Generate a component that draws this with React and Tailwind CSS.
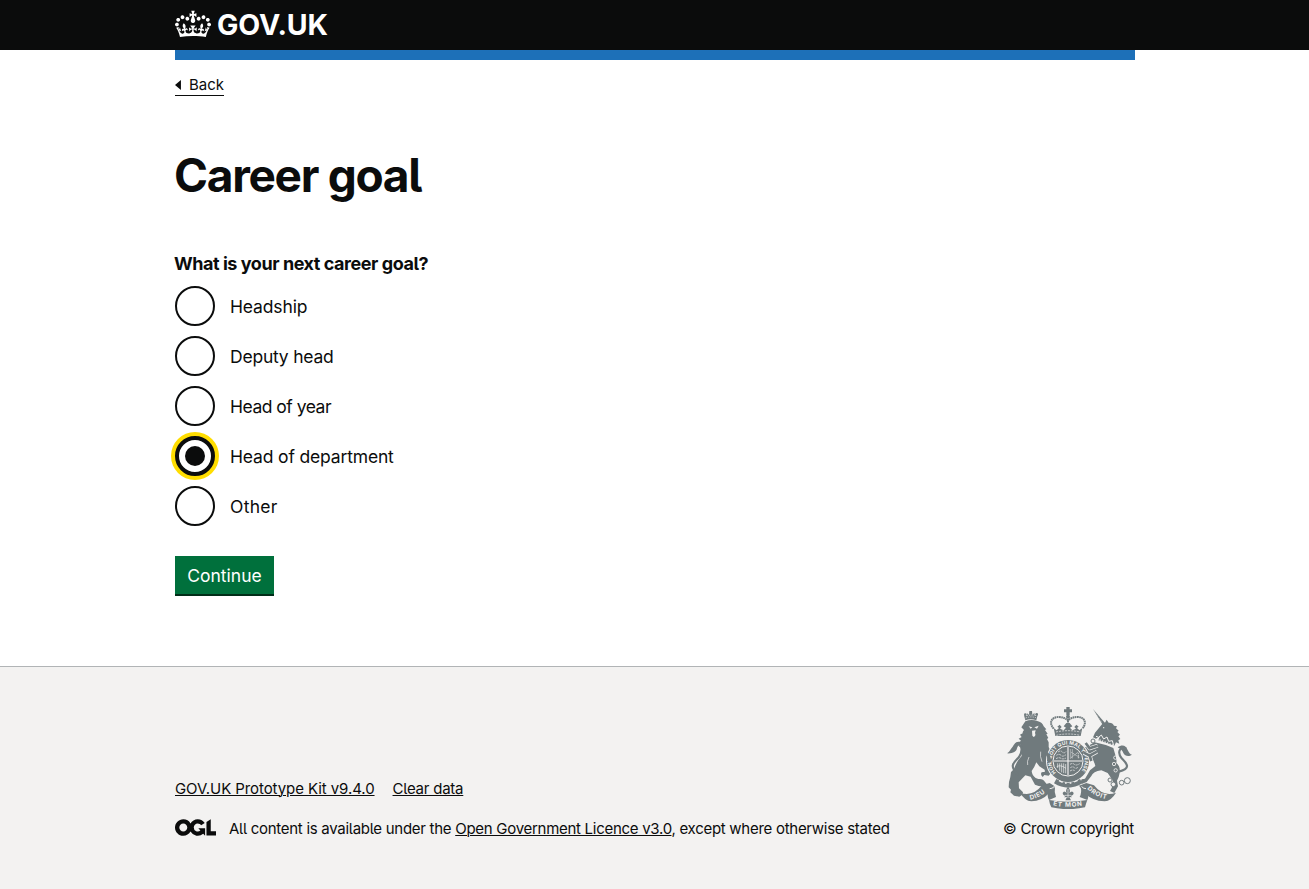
const options = [
  { label: "Headship", tracking: "tracking-[-0.14px]" },
  { label: "Deputy head", tracking: "tracking-[-0.22px]" },
  { label: "Head of year", tracking: "tracking-[-0.5px]" },
  { label: "Head of department", tracking: "tracking-[-0.16px]", checked: true },
  { label: "Other", tracking: "tracking-[0.3px]" },
];

function Crown() {
  return (
    <svg className="h-[30px] w-9 shrink-0" viewBox="0 0 132 97" fill="currentColor" aria-hidden="true">
      <path
        fillRule="evenodd"
        d="M25 30.2c3.5 1.5 7.7-.2 9.1-3.7 1.5-3.6-.2-7.8-3.9-9.2-3.6-1.4-7.6.3-9.1 3.9-1.4 3.5.3 7.5 3.9 9zM9 39.5c3.6 1.5 7.8-.2 9.2-3.7 1.5-3.6-.2-7.8-3.9-9.1-3.6-1.5-7.6.2-9.1 3.8-1.4 3.5.3 7.5 3.8 9zM4.4 57.2c3.5 1.5 7.7-.2 9.1-3.8 1.5-3.6-.2-7.7-3.9-9.1-3.5-1.5-7.6.3-9.1 3.8-1.4 3.5.3 7.6 3.9 9.1zm38.3-21.4c3.5 1.5 7.7-.2 9.1-3.8 1.5-3.6-.2-7.7-3.9-9.1-3.6-1.5-7.6.3-9.1 3.8-1.3 3.6.4 7.7 3.9 9.1zm64.4-5.6c-3.6 1.5-7.8-.2-9.1-3.7-1.5-3.6.2-7.8 3.8-9.2 3.6-1.4 7.7.3 9.2 3.9 1.3 3.5-.4 7.5-3.9 9zm15.9 9.3c-3.6 1.5-7.7-.2-9.1-3.7-1.5-3.6.2-7.8 3.7-9.1 3.6-1.5 7.7.2 9.2 3.8 1.5 3.5-.3 7.5-3.8 9zm4.7 17.7c-3.6 1.5-7.8-.2-9.2-3.8-1.5-3.6.2-7.7 3.9-9.1 3.6-1.5 7.7.3 9.2 3.8 1.3 3.5-.4 7.6-3.9 9.1zM89.3 35.8c-3.6 1.5-7.8-.2-9.2-3.8-1.4-3.6.2-7.7 3.9-9.1 3.6-1.5 7.7.3 9.2 3.8 1.4 3.6-.3 7.7-3.9 9.1zM69.7 17.7l8.9 4.7V9.3l-8.9 2.8c-.2-.3-.5-.6-.9-.9L72.4 0H59.6l3.5 11.2c-.3.3-.6.5-.9.9l-8.8-2.8v13.1l8.8-4.7c.3.3.6.7.9.9l-5 15.4v.1c-.2.8-.4 1.6-.4 2.4 0 4.1 3.1 7.5 7 8.1h.2c.3 0 .7.1 1 .1.4 0 .7 0 1-.1h.2c4-.6 7.1-4.1 7.1-8.1 0-.8-.1-1.7-.4-2.4V34l-5.1-15.4c.4-.2.7-.6 1-.9zM66 92.8c16.9 0 32.8 1.1 47.1 3.2 4-16.9 8.9-26.7 14-33.5l-9.6-3.4c1 4.9 1.1 7.2 0 10.2-1.5-1.4-3-4.3-4.2-8.7L108.6 76c2.8-2 5-3.2 7.5-3.3-4.4 9.4-10 11.9-13.6 11.2-4.3-.8-6.3-4.6-5.6-7.9 1-4.7 5.7-5.9 8-.5 4.3-8.7-3-11.4-7.6-8.8 7.1-7.2 7.9-13.5 2.1-21.1-8 6.1-8.1 12.3-4.5 20.8-4.7-5.4-12.1-2.5-9.5 6.2 3.4-5.2 7.9-2 7.2 3.1-.6 4.3-6.4 7.8-13.5 7.2-10.3-.9-10.9-8-11.2-13.8 2.5-.5 7.1 1.8 11 7.3L80.2 60c-4.1 4.4-8 5.3-12.3 5.4 1.4-4.4 8-11.6 8-11.6H55.5s6.4 7.2 7.9 11.6c-4.2-.1-8-1-12.3-5.4l1.4 16.4c3.9-5.5 8.5-7.7 10.9-7.3-.3 5.8-.9 12.8-11.1 13.8-7.2.6-12.9-2.9-13.5-7.2-.7-5 3.8-8.3 7.1-3.1 2.7-8.7-4.6-11.6-9.4-6.2 3.7-8.5 3.6-14.7-4.6-20.8-5.8 7.6-5 13.9 2.2 21.1-4.7-2.6-11.9.1-7.7 8.8 2.3-5.5 7.1-4.2 8.1.5.7 3.3-1.3 7.1-5.7 7.9-3.5.7-9-1.8-13.5-11.2 2.5.1 4.7 1.3 7.5 3.3l-4.7-15.4c-1.2 4.4-2.7 7.2-4.3 8.7-1.1-3-.9-5.3 0-10.2l-9.5 3.4c5 6.9 9.9 16.7 14 33.5 14.8-2.1 30.8-3.2 47.7-3.2z"
      />
    </svg>
  );
}

function OglLogo() {
  return (
    <svg className="h-[17px] w-[41px] shrink-0" viewBox="0 0 483.2 195.7" fill="currentColor" aria-hidden="true">
      <path d="M421.5 142.8V.1l-50.7 32.3v161.1h112.4v-50.7zm-122.3-9.6A47.12 47.12 0 0 1 221 97.8c0-26 21.1-47.1 47.1-47.1 16.7 0 31.4 8.7 39.7 21.8l42.7-27.2A97.63 97.63 0 0 0 268.1 0c-36.5 0-68.3 20.1-85.1 49.7A98 98 0 0 0 97.8 0C43.9 0 0 43.9 0 97.8s43.9 97.8 97.8 97.8c36.5 0 68.3-20.1 85.1-49.7a97.76 97.76 0 0 0 149.6 25.4l19.4 22.2h3v-87.8h-80l24.3 27.5zM97.8 145c-26 0-47.1-21.1-47.1-47.1s21.1-47.1 47.1-47.1 47.1 21.1 47.1 47.1S123.8 145 97.8 145" />
    </svg>
  );
}

function RoyalArms() {
  return (
    <svg className="h-[102px] w-[125px]" viewBox="36 36 375 306" fill="#707a7d" aria-hidden="true">
      <defs>
        <path id="garter" d="M183 233 A50 50 0 1 1 255 233" />
        <path id="motto-left" d="M106 314 Q134 310 157 286" />
        <path id="motto-mid" d="M174 331 Q218 340 268 331" />
        <path id="motto-right" d="M276 281 Q303 309 344 314" />
      </defs>

      {/* imperial crown */}
      <path d="M214 36h10v7h7v9h-7v8h-10v-8h-7v-9h7z" />
      <circle cx="219" cy="65" r="6" />
      <g fill="none" stroke="#707a7d">
        <path d="M176 101C160 82 171 66 190 66c13 0 22 4 29 10 7-6 16-10 29-10 19 0 30 16 14 35" strokeWidth="6" strokeDasharray="5 1.5" />
        <path d="M219 72v18" strokeWidth="6" strokeDasharray="4 1.5" />
      </g>
      <path d="M176 99l9 7 7-7-5-4 7-6 6 7-5 5 11 5 7-8-7-4 8-10h10l8 10-7 4 7 8 11-5-5-5 6-7 7 6-5 4 7 7 9-7-5 24H181z" />
      <path d="M183 111q36-8 73 0M184 121q35-8 71 0" fill="none" stroke="#f3f2f1" strokeWidth="2" strokeDasharray="6 3" />

      {/* lion */}
      <path d="M91 76l-4-15 8 3 1-9 6 4 1-11h8l1 11 6-5 2 9 8-4-4 17q-17-6-33 0z" />
      <circle cx="91" cy="59" r="4" />
      <circle cx="125" cy="58" r="4" />
      <path d="M95 61l24-1M92 69q15-6 31-1" fill="none" stroke="#f3f2f1" strokeWidth="2" strokeDasharray="4 3" />
      <path d="M91 79q19-8 38 0 13 3 17 15l8 9-4 2 8 11-4 2 6 11-4 3 5 10 0 14 7 16-1 11 6 4 1 14-5 3-3-9-9-4-4 5 5 11 9 8 0 10 5 7-6 4-5 6-13-2-5 6q-8-8-3-14l10-2-1-6-16-10-9-12q-6 16-14 26 1 13 12 21l8 3q14-2 20 9l7 8-7 6-19-2-11-4-13-24-16-4-20 21 1 18 12 12-2 7-9 6-16-3-11-10 2-8-7-7 1-16 4-15 2-15 9-9q8-24 23-39l-2-17 2-9-8-2 6-8-7-4 7-6-7-6 9-5-5-7 8-4q-1-5 4-10l-8-8z" />
      <path d="M101 94l11 3-5 4zM118 97l13-5-5 9zM111 107l11-1-2 8q4 8-4 12l-4-4z" fill="#f3f2f1" />
      <path d="M137 170q-3 14 4 30M102 186q-7 14-4 24" fill="none" stroke="#f3f2f1" strokeWidth="2" />
      <path d="M70 240C39 211 58 202 72 186 86 166 79 141 62 148" fill="none" stroke="#707a7d" strokeWidth="6.5" />
      <path d="M83 145c-17-12-24 1-30 10-8 8-8 15-17 20 17 1 28-4 30-15 3-10 9-9 17-15z" />

      {/* unicorn */}
      <path d="M294 42l36 42-7 5z" />
      <path d="M299 50l22 32" stroke="#f3f2f1" strokeWidth="1.5" strokeDasharray="2 4" />
      <path d="M321 88l10-6 4-8 6 9q12-1 16 9l9 2-3 6 8 7-4 4 8 8-5 5 6 8-6 4 3 10-10-4-5 10-48-16 5-12-12 7-9-4 6-14z" />
      <circle cx="326" cy="98" r="2" fill="#f3f2f1" />
      <path d="M303 124l8 3 8-7 7 12 10-6 5 13 11-2 4 15" fill="none" stroke="#f3f2f1" strokeWidth="3" />
      <path d="M306 132l49 19" stroke="#f3f2f1" strokeWidth="4" strokeDasharray="4 4" />
      <path d="M299 142q27 5 56 17l6 21q5 14 3 24 13 10 10 29-2 13-8 24l3 17-11 20-13-6 11-20-4-14-14-20-19-8q-25 4-30 17l-14 18-13 5-6-3 4-10 10-2q9-14 15-25l16-13q-4-15-9-22l-16-1-10-30z" />
      <path d="M371 230c44-10 19-29 9-40-16-21-2-38 14-29" fill="none" stroke="#707a7d" strokeWidth="6.5" />
      <path d="M368 157c16-12 25-3 30 8 4 8 7 14 13 14-11 8-22 3-26-5-4-10-8-11-17-17z" />

      {/* garter and shield */}
      <circle cx="219" cy="198" r="66" fill="#f3f2f1" />
      <circle cx="219" cy="198" r="63" />
      <circle cx="219" cy="198" r="45" fill="none" stroke="#f3f2f1" strokeWidth="3" />
      <text fill="#f3f2f1" className="font-[Inter] text-[15px] font-bold">
        <textPath href="#garter" textLength="226">HONI SOIT QUI MAL Y PENSE</textPath>
      </text>
      <g stroke="#f3f2f1" fill="none">
        <path d="M219 156v84M177 198h84" strokeWidth="3.5" />
        <g strokeWidth="2">
          <path d="M189 171q8-6 13 0t12-2M184 181q9-6 14 0t15-2M183 191q9-5 15-1t15-1" strokeDasharray="7 2" />
          <path d="M226 163v28M232 163v27M250 174v18M229 172l24 15M228 188l22-17" strokeDasharray="4 2" />
          <path d="M188 205v14M194 205v22M200 205v27M206 205v29M212 207v28M185 215q12-7 28 5" />
          <path d="M225 208q8-5 13 0t16-2M226 218q8-5 12 0t12-2M225 228q8-5 14-1" strokeDasharray="7 2" />
        </g>
      </g>
      <path d="M184 252q35 22 71 0l7 13q-42 26-85 0z" />
      <path d="M192 257l11 5M210 264h5M224 264h5M237 261l11-5" stroke="#f3f2f1" strokeWidth="4" />

      {/* forelegs laid over the garter */}
      <g fill="none" strokeLinejoin="round">
        <path d="M308 152l-24 8-12-16M306 170l-22 12-18-9M284 182l5 16" stroke="#f3f2f1" strokeWidth="12" />
        <path d="M308 152l-24 8-12-16M306 170l-22 12-18-9M284 182l5 16" stroke="#707a7d" strokeWidth="8" />
        <path d="M148 165l12 17 4 20" stroke="#707a7d" strokeWidth="9" />
      </g>

      {/* chain */}
      <g fill="none" stroke="#707a7d" strokeWidth="3">
        <circle cx="294" cy="138" r="6" fill="#f3f2f1" />
        <circle cx="345" cy="255" r="6" fill="#f3f2f1" />
        <circle cx="355" cy="268" r="7" fill="#f3f2f1" />
        <circle cx="380" cy="263" r="7" />
        <circle cx="397" cy="257" r="9" />
      </g>
      <g fill="none" stroke="#f3f2f1" strokeWidth="2.5">
        <circle cx="361" cy="188" r="5" />
        <circle cx="357" cy="207" r="5" />
        <circle cx="362" cy="226" r="5" />
      </g>

      {/* motto ribbon */}
      <path d="M75 293q38 14 66-22l23-7 15 10-17 21q-21 23-53 24-20-2-34-26z" />
      <path d="M363 293q-38 14-66-22l-23-7-22 8 20 24q19 21 57 23 20-2 34-26z" />
      <path d="M160 291l20-15q-3 17 3 30l-21 9q-7-13-2-24zM277 291l-20-15q4 17-3 30l23 9q6-13 0-24z" />
      <path d="M164 281q10 0 13-7M273 281q-10 0-13-7" stroke="#f3f2f1" strokeWidth="3" fill="none" />
      <path d="M162 315q56 11 115 0-4 10-7 22-51 11-101 0-5-9-7-22z" />
      <g fill="#f3f2f1" className="font-[Inter] text-[19px] font-bold">
        <text><textPath href="#motto-left" textLength="50">DIEU</textPath></text>
        <text><textPath href="#motto-mid" textLength="88">ET MON</textPath></text>
        <text><textPath href="#motto-right" textLength="66">DROIT</textPath></text>
      </g>

      {/* rose and thistle badge */}
      <path d="M219 276q9 9 4 18 9-9 13 0-1 8-9 8l4 5-8-1 5 10h-17l5-10-9 1 5-5q-8 0-9-8 4-9 12 0-5-9 4-18z" />
      <path d="M219 282v27M210 301h18" stroke="#f3f2f1" strokeWidth="2" />
    </svg>
  );
}

function Radio({ checked }) {
  return checked ? (
    <span className="flex size-10 shrink-0 items-center justify-center rounded-full border-4 border-[#0b0c0c] bg-white shadow-[0_0_0_4px_#ffdd00]">
      <span className="size-5 rounded-full bg-[#0b0c0c]" />
    </span>
  ) : (
    <span className="size-10 shrink-0 rounded-full border-2 border-[#0b0c0c] bg-white" />
  );
}

const linkClass = "underline decoration-1 underline-offset-1";

export default function App() {
  return (
    <div className="flex h-[889px] flex-col bg-white font-[Inter,sans-serif] text-[#0b0c0c] [font-feature-settings:'cv05']">
      <header className="h-[60px] shrink-0">
        <div className="h-[50px] bg-[#0b0c0c]">
          <a className="mx-auto flex h-[49px] w-[959px] items-center text-white">
            <span className="-mt-px flex">
              <Crown />
            </span>
            <span className="ml-[6px] text-[28.5px] leading-[49px] font-bold tracking-[-0.1px]">GOV.UK</span>
          </a>
        </div>
        <div className="mx-auto h-[10px] w-[960px] bg-[#1d70b8]" />
      </header>

      <div className="mx-auto w-[959px] grow">
        <a className="mt-[15px] flex h-[21px] w-[49px] items-center border-b border-[#0b0c0c] text-[15px] leading-5">
          <svg className="h-[10px] w-[6px]" viewBox="0 0 6 10" fill="currentColor" aria-hidden="true">
            <path d="M0 5l6-5v10z" />
          </svg>
          <span className="ml-2">Back</span>
        </a>

        <main className="pt-[54px]">
          <h1 className="-ml-px text-[46px] leading-[50px] font-bold tracking-[-1.3px]">Career goal</h1>
          <fieldset className="mt-[51px]">
            <legend className="-ml-px text-[18px] leading-[25px] font-bold tracking-[-0.45px]">
              What is your next career goal?
            </legend>
            <div className="mt-[10px] flex flex-col gap-[10px]">
              {options.map((o) => (
                <label key={o.label} className="flex items-center">
                  <Radio checked={o.checked} />
                  <span className={`ml-[15px] pt-px text-[17.5px] leading-6 ${o.tracking}`}>{o.label}</span>
                </label>
              ))}
            </div>
          </fieldset>
          <button className="mt-[30px] block h-[38px] w-[99px] bg-[#00703c] pt-px text-[17.5px] leading-[38px] text-white shadow-[0_2px_0_#002d18]">
            Continue
          </button>
        </main>
      </div>

      <footer className="h-[223px] shrink-0 border-t border-[#b1b4b6] bg-[#f3f2f1]">
        <div className="mx-auto flex w-[959px] items-end justify-between pt-10 text-[15px] leading-5">
          <div>
            <div className="flex gap-[18px]">
              <a className={`tracking-[-0.08px] ${linkClass}`}>GOV.UK Prototype Kit v9.4.0</a>
              <a className={`tracking-[-0.23px] ${linkClass}`}>Clear data</a>
            </div>
            <div className="mt-5 flex items-center">
              <span className="-mt-[3px] flex">
                <OglLogo />
              </span>
              <span className="ml-[13px] tracking-[-0.28px] whitespace-pre">
                {"All content is available under the "}
                <a className={linkClass}>Open Government Licence v3.0</a>, except where otherwise stated
              </span>
            </div>
          </div>
          <div className="flex flex-col items-center">
            <span className="ml-[2px] flex">
              <RoyalArms />
            </span>
            <span className="mt-[10px] tracking-[-0.28px]">© Crown copyright</span>
          </div>
        </div>
      </footer>
    </div>
  );
}
